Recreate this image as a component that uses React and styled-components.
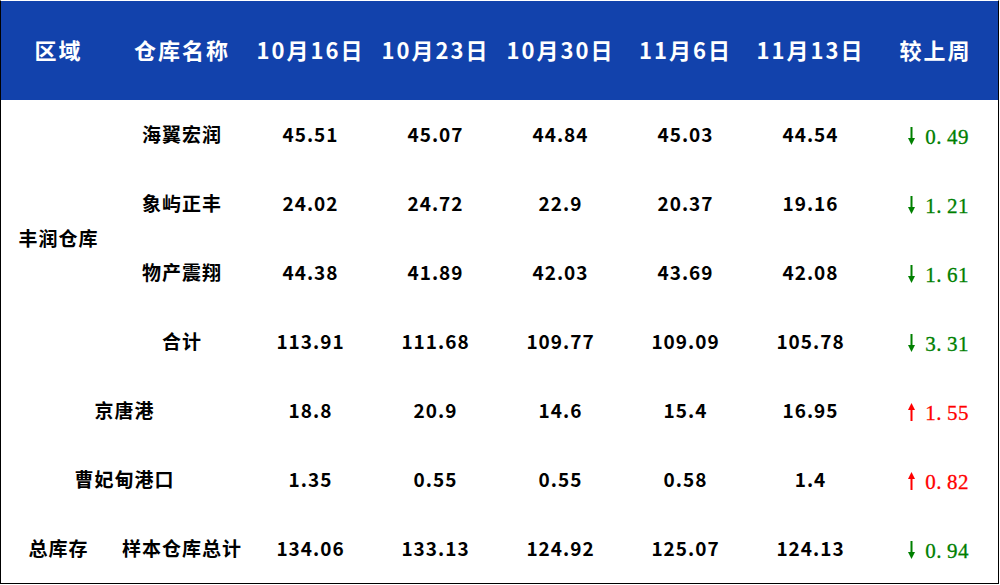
import React from "react";
import styled, { createGlobalStyle } from "styled-components";

const Global = createGlobalStyle`
  html, body { margin: 0; padding: 0; background: #fff; }
  body { font-family: "Noto Sans CJK SC", "Noto Sans", sans-serif; }
`;

const Frame = styled.div`
  width: 999px;
  height: 584px;
  box-sizing: border-box;
  border: 1px solid #000;
  border-top: 1px solid #fff;
  overflow: hidden;
`;

const Table = styled.table`
  width: 997px;
  border-collapse: collapse;
  table-layout: fixed;
  border-spacing: 0;
`;

const Head = styled.thead`
  background: #1242ac;
`;

const HeadCell = styled.th`
  height: 99px;
  padding: 0 0 4px;
  box-sizing: border-box;
  color: #fff;
  font-size: 22px;
  font-weight: 700;
  letter-spacing: 2px;
  text-align: center;
  vertical-align: middle;
  white-space: nowrap;
`;

const Cell = styled.td`
  height: 69px;
  padding: 0 0 2px;
  box-sizing: border-box;
  color: #000;
  font-size: 19px;
  font-weight: 700;
  letter-spacing: 1px;
  text-align: center;
  vertical-align: middle;
  white-space: nowrap;
`;

const Change = styled.div`
  display: flex;
  justify-content: center;
  align-items: flex-end;
  gap: 10px;
  margin-top: 4px;
  padding-left: 6px;
  color: ${(p) => (p.$up ? "#ff0000" : "#008000")};
  font-family: "Liberation Serif", "DejaVu Serif", serif;
  font-size: 21px;
  font-weight: 400;
  letter-spacing: 0.5px;
`;

const Num = styled.span`
  display: block;
  line-height: 1;
  margin-bottom: -3px;
  -webkit-text-stroke: 0.3px currentColor;
`;

const Dot = styled.span`
  margin-right: 5px;
`;

const Arrow = ({ up }) => (
  <svg width="7" height="18" viewBox="0 0 7 18" aria-hidden="true">
    {up ? (
      <>
        <rect x="2.5" y="4" width="2" height="14" fill="currentColor" />
        <path d="M3.5 0 L7 7 L0 7 Z" fill="currentColor" />
      </>
    ) : (
      <>
        <rect x="2.5" y="0" width="2" height="14" fill="currentColor" />
        <path d="M3.5 18 L7 11 L0 11 Z" fill="currentColor" />
      </>
    )}
  </svg>
);

const Delta = ({ value }) => {
  const up = value > 0;
  const [a, b] = Math.abs(value).toFixed(2).split(".");
  return (
    <Change $up={up}>
      <Arrow up={up} />
      <Num>
        {a}
        <Dot>.</Dot>
        {b}
      </Num>
    </Change>
  );
};

const dates = ["10月16日", "10月23日", "10月30日", "11月6日", "11月13日"];

const fengrun = [
  { name: "海翼宏润", vals: ["45.51", "45.07", "44.84", "45.03", "44.54"], d: -0.49 },
  { name: "象屿正丰", vals: ["24.02", "24.72", "22.9", "20.37", "19.16"], d: -1.21 },
  { name: "物产震翔", vals: ["44.38", "41.89", "42.03", "43.69", "42.08"], d: -1.61 },
  { name: "合计", vals: ["113.91", "111.68", "109.77", "109.09", "105.78"], d: -3.31 },
];

const ports = [
  { name: "京唐港", vals: ["18.8", "20.9", "14.6", "15.4", "16.95"], d: 1.55 },
  { name: "曹妃甸港口", vals: ["1.35", "0.55", "0.55", "0.58", "1.4"], d: 0.82 },
];

const total = { vals: ["134.06", "133.13", "124.92", "125.07", "124.13"], d: -0.94 };

const Values = ({ vals, d }) => (
  <>
    {vals.map((v, i) => (
      <Cell key={i}>{v}</Cell>
    ))}
    <Cell>
      <Delta value={d} />
    </Cell>
  </>
);

export default function App() {
  return (
    <>
      <Global />
      <Frame>
        <Table>
          <colgroup>
            <col style={{ width: 115 }} />
            <col style={{ width: 132 }} />
            {[0, 1, 2, 3, 4, 5].map((i) => (
              <col key={i} style={{ width: 125 }} />
            ))}
          </colgroup>
          <Head>
            <tr>
              <HeadCell>区域</HeadCell>
              <HeadCell>仓库名称</HeadCell>
              {dates.map((d) => (
                <HeadCell key={d}>{d}</HeadCell>
              ))}
              <HeadCell>较上周</HeadCell>
            </tr>
          </Head>
          <tbody>
            {fengrun.map((r, i) => (
              <tr key={r.name}>
                {i === 0 && <Cell rowSpan={4}>丰润仓库</Cell>}
                <Cell>{r.name}</Cell>
                <Values vals={r.vals} d={r.d} />
              </tr>
            ))}
            {ports.map((r) => (
              <tr key={r.name}>
                <Cell colSpan={2}>{r.name}</Cell>
                <Values vals={r.vals} d={r.d} />
              </tr>
            ))}
            <tr>
              <Cell>总库存</Cell>
              <Cell>样本仓库总计</Cell>
              <Values vals={total.vals} d={total.d} />
            </tr>
          </tbody>
        </Table>
      </Frame>
    </>
  );
}
